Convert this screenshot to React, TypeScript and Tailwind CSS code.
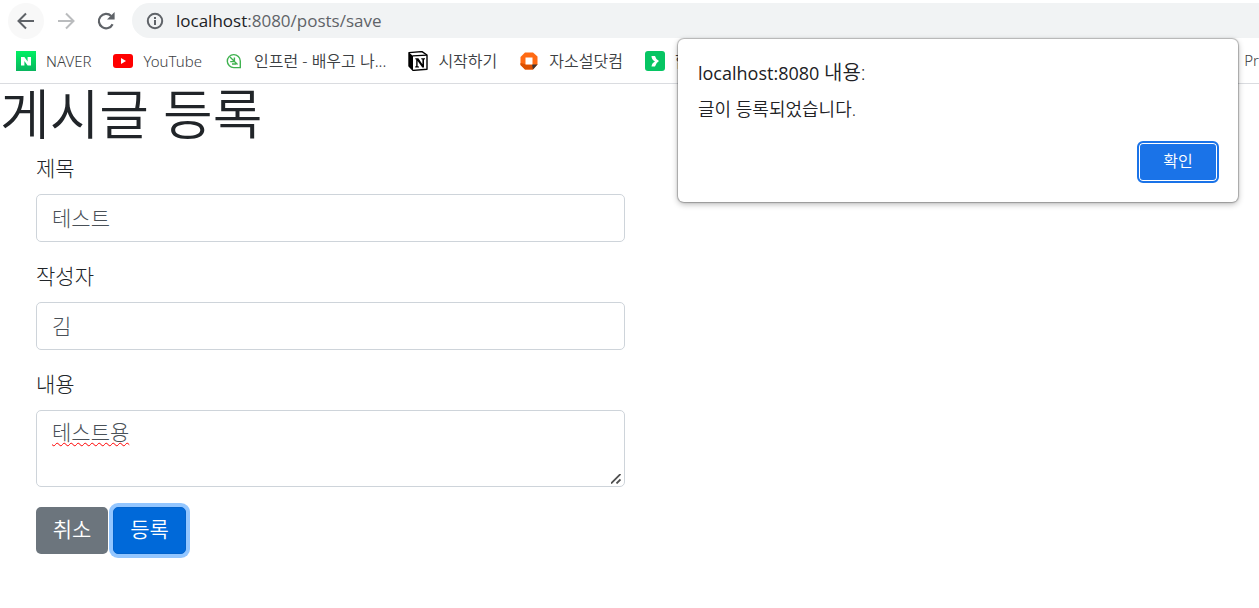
import { useState } from "react";

const BackIcon = () => (
  <svg className="h-5 w-5" viewBox="0 0 20 20" fill="none" stroke="#5f6368" strokeWidth="2">
    <path d="M18 10H3M10 2.5 2.5 10 10 17.5" />
  </svg>
);

const ForwardIcon = () => (
  <svg className="h-5 w-5" viewBox="0 0 20 20" fill="none" stroke="#babcbe" strokeWidth="2">
    <path d="M2 10h15M10 2.5 17.5 10 10 17.5" />
  </svg>
);

const ReloadIcon = () => (
  <svg className="h-5 w-5" viewBox="0 0 20 20" fill="none">
    <path d="M16.6 13.2A7.2 7.2 0 1 1 15.2 5" stroke="#5f6368" strokeWidth="2.2" />
    <path d="M18.6 1v7.6H11z" fill="#5f6368" />
  </svg>
);

const InfoIcon = () => (
  <svg className="h-[18px] w-[18px]" viewBox="0 0 18 18" fill="none" stroke="#5f6368" strokeWidth="2">
    <circle cx="9" cy="9" r="7.2" />
    <path d="M9 8v5M9 5v2" />
  </svg>
);

const NaverIcon = () => (
  <svg className="h-5 w-5" viewBox="0 0 20 20">
    <defs>
      <linearGradient id="naver" x1="0" y1="0" x2="0" y2="1">
        <stop offset="0" stopColor="#00f163" />
        <stop offset="1" stopColor="#0ab55f" />
      </linearGradient>
    </defs>
    <path d="M0 0h20v20H0z" fill="url(#naver)" />
    <path d="M5 6h3.4l3.2 4.5V6H15v8.5h-3.4L8.4 10v4.5H5z" fill="#fff" />
  </svg>
);

const YouTubeIcon = () => (
  <svg className="h-5 w-5" viewBox="0 0 20 20">
    <rect y="3" width="20" height="14" rx="3" fill="#f00" />
    <path d="M8 7v6l5-3z" fill="#fff" />
  </svg>
);

const InflearnIcon = () => (
  <svg className="h-5 w-5" viewBox="0 0 20 20" fill="none" stroke="#3fb24f" strokeWidth="1.4">
    <path d="M16.3 16.6H10A6.5 6.5 0 1 1 16.3 10z" />
    <path d="m6 6 7.5 7.5M10.4 6.5v4M6.2 10.6h4.4M8 13h4" />
  </svg>
);

const NotionIcon = () => (
  <svg className="h-5 w-5" viewBox="0 0 20 20">
    <path d="M1 1.6 14 .6l5 3.4v14.2L5 19.4 1 15z" fill="#fff" stroke="#000" strokeWidth="1.4" strokeLinejoin="round" />
    <path d="M1 1.6 5 5v14.4L1 15zM4.6 4.2 19 3.4v1.4L5 5.6z" fill="#000" />
    <path d="M7.3 7.3h3.1l4 6V8.6l-1.2-.3V7.2H17v1l-1 .4v8h-1.7L9.6 10v5.2l1.4.3v1H7.2v-1l1-.4V8.6l-.9-.3z" fill="#000" />
  </svg>
);

const JasoseolIcon = () => (
  <svg className="h-5 w-5" viewBox="0 0 20 20">
    <path d="M6 1.5h8l4.5 4v8L14 18.5H6L1.5 14V6z" fill="#ff6a13" />
    <path d="M1.5 12 8 13.5h6v5H6L1.5 14z" fill="#dc5000" />
    <path d="M13 13.5h5.5L14 18.5z" fill="#3f3431" />
    <rect x="6.5" y="6.5" width="7" height="7" fill="#fff" />
  </svg>
);

const ArrowIcon = () => (
  <svg className="h-5 w-5" viewBox="0 0 20 20">
    <rect width="20" height="20" rx="3" fill="#06c563" />
    <path d="M6.5 5H10q.6 3 4 5-3.4 2-4 5.5H6.5q.3-3.500 3.500-5Q6.500 8.500 6.500 5z" fill="#fff" />
  </svg>
);

const bookmarks = [
  { label: "NAVER", Icon: NaverIcon },
  { label: "YouTube", Icon: YouTubeIcon },
  { label: "인프런 - 배우고 나...", Icon: InflearnIcon, korean: true },
  { label: "시작하기", Icon: NotionIcon, korean: true },
  { label: "자소설닷컴", Icon: JasoseolIcon, korean: true },
  { label: "합", Icon: ArrowIcon, korean: true },
];

const BrowserBar = () => (
  <header className="border-b border-[#dadce0] text-[#3c4043]">
    <div className="flex h-[38px] items-center gap-1 pt-[3px] pl-2">
      <button aria-label="뒤로" className="grid size-9 place-items-center rounded-full bg-[#f8f8f8]">
        <BackIcon />
      </button>
      <button aria-label="앞으로" className="grid size-9 place-items-center rounded-full">
        <ForwardIcon />
      </button>
      <button aria-label="새로고침" className="grid size-9 place-items-center rounded-full">
        <ReloadIcon />
      </button>
      <div className="ml-1 flex h-[35px] flex-1 items-center gap-3 rounded-l-full bg-[#f1f3f4] pl-[14px]">
        <InfoIcon />
        <span className="text-[17px] text-[#5f6368]">
          <span className="text-[#202124]">localhost</span>:8080/posts/save
        </span>
      </div>
    </div>
    <nav className="flex h-[45px] items-center gap-[22px] overflow-hidden pl-4 font-['Noto_Sans','Noto_Sans_CJK_KR',sans-serif] text-[15px] font-[350] whitespace-nowrap">
      {bookmarks.map(({ label, Icon, korean }) => (
        <a key={label} href="#" className="flex shrink-0 items-center gap-[10px]">
          <Icon />
          <span className={korean ? "text-[16px] leading-5" : "leading-5"}>{label}</span>
        </a>
      ))}
      <a href="#" className="ml-auto shrink-0">
        Pr
      </a>
    </nav>
  </header>
);

const AlertDialog = () => (
  <div
    role="alertdialog"
    aria-labelledby="alert-title"
    aria-describedby="alert-message"
    className="absolute top-[39px] right-[21px] flex h-[163px] w-[560px] flex-col rounded-md bg-white pt-5 pr-[19px] pb-[19px] pl-5 text-[#202124] shadow-[0_0_1px_1px_rgba(0,0,0,0.25),0_2px_6px_rgba(0,0,0,0.3)]"
  >
    <h2 id="alert-title" className="text-[18px] leading-7">
      localhost:8080 <span className="text-[20px] font-[350]">내용:</span>
    </h2>
    <p id="alert-message" className="mt-2 text-[18px] leading-7 font-[350]">
      글이 등록되었습니다.
    </p>
    <button className="mt-auto h-[42px] w-[82px] self-end rounded-md border-2 border-[#1a73e8] bg-[#1a73e8] pb-[2px] text-[16px] font-[350] text-white inset-ring inset-ring-white">
      확인
    </button>
  </div>
);

const field =
  "block w-full rounded-[5px] border border-[#ced4da] bg-white px-[15px] text-[21px] leading-[30px] font-light text-[#495057] outline-none";
const labelClass = "mb-3 block text-[21px] leading-7 font-light";

export default function App() {
  const [title, setTitle] = useState("테스트");
  const [author, setAuthor] = useState("김");
  const [content, setContent] = useState("테스트용");

  return (
    <div className="relative pb-6 font-['Open_Sans','Noto_Sans_CJK_KR',sans-serif]">
      <BrowserBar />
      <main className="text-[#212529]">
        <h1 className="mb-[10px] text-[54px] leading-[60px] font-[350]">게시글 등록</h1>
        <div className="w-1/2 pr-[5px] pl-9">
          <form onSubmit={(e) => e.preventDefault()}>
            <div className="mb-5">
              <label htmlFor="title" className={labelClass}>제목</label>
              <input id="title" className={`${field} h-12 pb-[2px]`} value={title} onChange={(e) => setTitle(e.target.value)} />
            </div>
            <div className="mb-5">
              <label htmlFor="author" className={labelClass}>작성자</label>
              <input id="author" className={`${field} h-12 pb-[2px]`} value={author} onChange={(e) => setAuthor(e.target.value)} />
            </div>
            <div className="relative mb-5">
              <label htmlFor="content" className={labelClass}>내용</label>
              <textarea
                id="content"
                spellCheck={false}
                className={`${field} h-[77px] resize-none py-[6px] underline decoration-[#f00] decoration-wavy decoration-1 underline-offset-2`}
                value={content}
                onChange={(e) => setContent(e.target.value)}
              />
              {/* resize grip */}
              <svg className="absolute right-1 bottom-[3px] h-[10px] w-[10px]" viewBox="0 0 10 10" stroke="#505050" strokeWidth="1.8">
                <path d="M0 9.500 9.500 0M5.500 9.500 9.500 5.500" />
              </svg>
            </div>
          </form>
          <div className="flex gap-[5px]">
            <button className="h-[47px] w-[72px] rounded-[5px] bg-[#6c757d] pb-[2px] text-[21px] font-[350] text-white">취소</button>
            <button className="h-[47px] w-[73px] rounded-[5px] border border-[#0062cc] bg-[#0069d9] pb-[2px] text-[21px] font-[350] text-white ring-4 ring-[#93c6ff]">
              등록
            </button>
          </div>
        </div>
      </main>
      <AlertDialog />
    </div>
  );
}
